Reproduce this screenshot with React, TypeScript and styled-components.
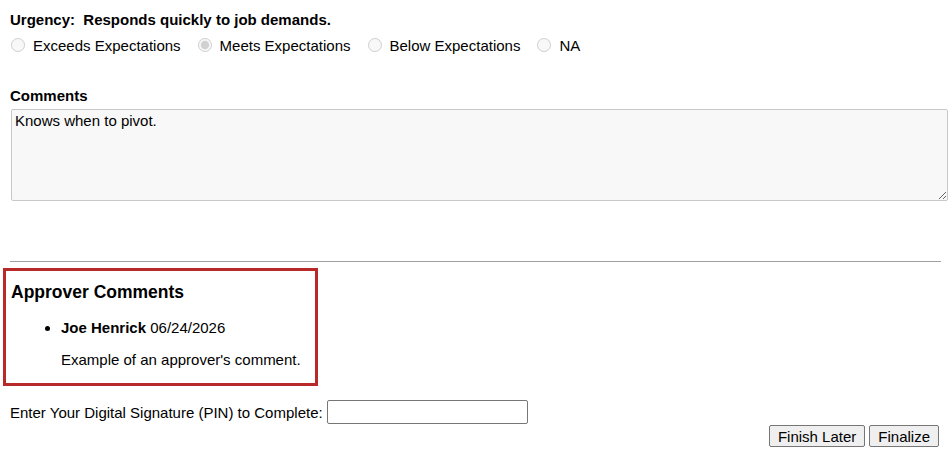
import React from 'react';
import styled, { createGlobalStyle } from 'styled-components';

const Global = createGlobalStyle`
  body {
    margin: 0;
    font-family: Arial, "Liberation Sans", sans-serif;
    font-size: 15px;
    color: #000;
    background: #fff;
  }
`;

const Page = styled.div`
  padding: 11px 9px 0 10px;
`;

const Question = styled.div`
  font-weight: bold;
  line-height: 18px;
`;

const Options = styled.div`
  display: flex;
  align-items: center;
  margin-top: 6px;
  height: 20px;
`;

const Option = styled.label`
  display: flex;
  align-items: center;
  margin-right: 16px;
  & input {
    margin: 0 8px 0 1px;
    width: 14px;
    height: 14px;
  }
`;

const Label = styled.div`
  font-weight: bold;
  margin-top: 32px;
  line-height: 18px;
`;

const Area = styled.textarea`
  display: block;
  box-sizing: border-box;
  width: 937px;
  height: 92px;
  margin: 4px 0 0 1px;
  background: #f8f8f8;
  border: 1px solid #c8c8c8;
  border-radius: 2px;
  font-family: Arial, "Liberation Sans", sans-serif;
  font-size: 15px;
  padding: 2px 3px;
  color: #000;
`;

const Rule = styled.hr`
  margin: 60px 0 0 0;
  border: none;
  border-top: 1px solid #a0a0a0;
  width: 931px;
`;

const ApproverBox = styled.div`
  width: 315px;
  height: 118px;
  box-sizing: border-box;
  margin: 6px 0 0 -7px;
  border: 3px solid #b82a2a;
  padding: 11px 0 0 5px;
`;

const BoxTitle = styled.div`
  font-size: 17.5px;
  font-weight: bold;
  line-height: 20px;
`;

const List = styled.ul`
  margin: 17px 0 0 0;
  padding-left: 50px;
  & li { line-height: 18px; }
`;

const Note = styled.p`
  margin: 14px 0 0 50px;
  line-height: 18px;
`;

const SignRow = styled.div`
  display: flex;
  align-items: center;
  margin-top: 14px;
  gap: 4px;
`;

const Pin = styled.input`
  width: 201px;
  height: 24px;
  box-sizing: border-box;
  border: 1px solid #767676;
  border-radius: 2px;
`;

const Actions = styled.div`
  display: flex;
  justify-content: flex-end;
  gap: 4px;
  margin-top: 1px;
  padding-right: 1px;
`;

const Button = styled.button`
  font-family: Arial, "Liberation Sans", sans-serif;
  font-size: 15px;
  height: 22px;
  padding: 0 8px;
  background: #efefef;
  border: 1px solid #767676;
  border-radius: 2px;
  color: #000;
`;

const options = ['Exceeds Expectations', 'Meets Expectations', 'Below Expectations', 'NA'];

export default function App() {
  return (
    <Page>
      <Global />
      <Question>Urgency:&nbsp; Responds quickly to job demands.</Question>
      <Options>
        {options.map((o, i) => (
          <Option key={o}>
            <input type="radio" name="urgency" disabled defaultChecked={i === 1} />
            {o}
          </Option>
        ))}
      </Options>
      <Label>Comments</Label>
      <Area defaultValue="Knows when to pivot." />
      <Rule />
      <ApproverBox>
        <BoxTitle>Approver Comments</BoxTitle>
        <List>
          <li><b>Joe Henrick</b> 06/24/2026</li>
        </List>
        <Note>Example of an approver's comment.</Note>
      </ApproverBox>
      <SignRow>
        Enter Your Digital Signature (PIN) to Complete: <Pin type="password" />
      </SignRow>
      <Actions>
        <Button>Finish Later</Button>
        <Button>Finalize</Button>
      </Actions>
    </Page>
  );
}
